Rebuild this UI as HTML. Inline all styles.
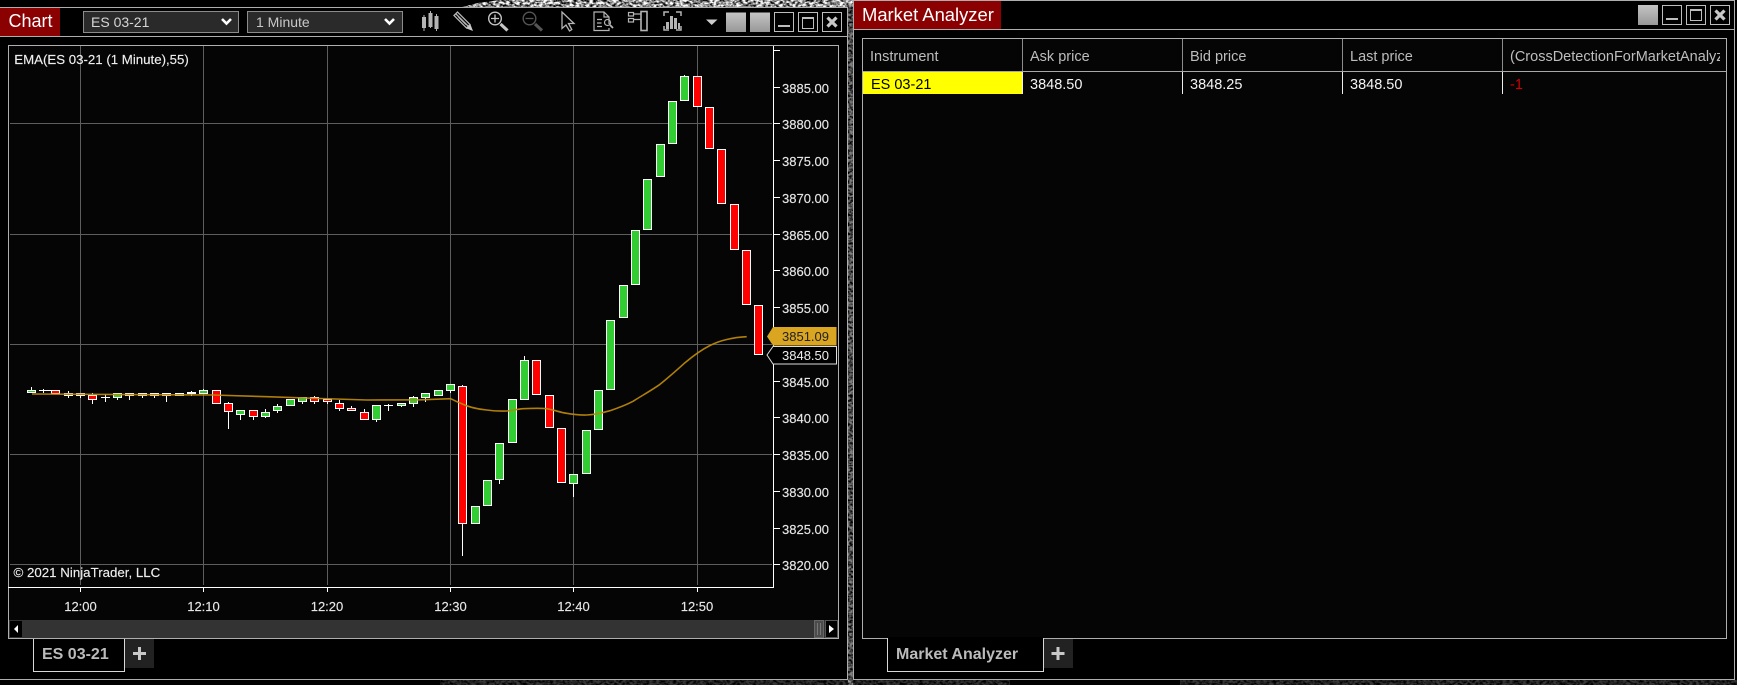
<!DOCTYPE html>
<html><head><meta charset="utf-8"><title>Chart</title>
<style>
html,body{margin:0;padding:0;background:#000;width:1737px;height:685px;overflow:hidden}
svg{display:block;font-family:"Liberation Sans",sans-serif}
.c{shape-rendering:crispEdges}
.p text{font-size:13px;fill:#e6e6e6;stroke:#e6e6e6;stroke-width:.15}
.h text{font-size:14.5px;fill:#bdbdbd}
.d text{font-size:14.5px;fill:#f4f4f4}
</style></head><body>
<svg width="1737" height="685" viewBox="0 0 1737 685" xmlns="http://www.w3.org/2000/svg">
<defs>
<filter id="n" x="0" y="0" width="100%" height="100%" color-interpolation-filters="sRGB">
<feTurbulence type="fractalNoise" baseFrequency=".3 .42" numOctaves="2" seed="7"/>
<feColorMatrix values="2.6 0 0 0 -.72  2.6 0 0 0 -.72  2.6 0 0 0 -.72  0 0 0 0 1"/>
</filter>
<clipPath id="top"><path d="M462 7L478 3L500 0H853V7H853V685H848V7Z"/></clipPath>
<clipPath id="bot"><path d="M440 680H1010V685H440ZM1180 680H1737V685H1180Z"/></clipPath>
<linearGradient id="g" x1="0" y1="0" x2="0" y2="1"><stop offset="0" stop-color="#c4c4c4"/><stop offset="1" stop-color="#989898"/></linearGradient>
</defs>
<rect width="1737" height="685" fill="#000"/>
<!-- wallpaper noise -->
<g clip-path="url(#top)"><rect x="462" y="0" width="392" height="685" fill="#fff" filter="url(#n)"/></g>
<rect x="848" y="7" width="5" height="678" fill="#000" opacity=".5"/>
<g clip-path="url(#bot)" opacity=".22"><rect x="440" y="680" width="1297" height="5" fill="#fff" filter="url(#n)"/></g>
<!-- left window -->
<rect x="0" y="7" width="848" height="673" fill="#000"/>
<g class="c" fill="none" stroke="#aeaeae">
<path d="M0 7.5H847.5V679.5H0"/>
<path d="M0 36.5H847"/>
<rect x="8.5" y="45.5" width="830" height="593" fill="#050505"/>
</g>
<rect x="0" y="8" width="60" height="28" fill="#8b0000"/>
<text x="8.5" y="27" font-size="18" fill="#fff">Chart</text>
<g class="c"><rect x="83.5" y="11.5" width="155" height="21" fill="#2a2a2a" stroke="#8c8c8c"/><rect x="247.5" y="11.5" width="155" height="21" fill="#2a2a2a" stroke="#8c8c8c"/></g>
<text x="91" y="27" font-size="14" fill="#d6d6d6">ES 03-21</text>
<text x="256" y="27" font-size="14" fill="#c8c8c8">1 Minute</text>
<path d="M222 19L226.5 23.5L231 19M385 19L389.5 23.5L394 19" fill="none" stroke="#fff" stroke-width="2.6"/>
<!-- toolbar icons -->
<g fill="#b4b4b4" stroke="none">
<rect x="422" y="17" width="4" height="11"/><rect x="423.5" y="15" width="1" height="16"/>
<rect x="428.5" y="13" width="4" height="14"/><rect x="430" y="11" width="1" height="17"/>
<rect x="434.5" y="16" width="4" height="13"/><rect x="436" y="14" width="1" height="17"/>
</g>
<g fill="none" stroke="#b4b4b4" stroke-width="1.3">
<path d="M454 15.5L457.5 12L470 24.5L466.5 28Z M456 14L468.5 26.5 M458.5 17L466 24.5"/>
</g>
<path d="M466.5 28.5L470.5 24.5L473 31Z" fill="#c8c8c8"/>
<g fill="none" stroke="#c4c4c4">
<circle cx="495" cy="18.5" r="6.3" stroke-width="1.4"/><path d="M495 14.5V22.5M491 18.5H499" stroke-width="1.3"/>
<path d="M500.5 24L507.5 30.5" stroke-width="3.2"/>
</g>
<g fill="none" stroke="#555">
<circle cx="529.5" cy="18.5" r="6.3" stroke-width="1.4"/><path d="M525.5 18.5H533.5" stroke-width="1.3"/>
<path d="M535 24L542 30.5" stroke-width="3.2"/>
</g>
<path d="M562 12V28.5L566 25L569.5 31L571.8 29.5L568.5 23.5L574 23.5Z" fill="none" stroke="#b4b4b4" stroke-width="1.3"/>
<g fill="none" stroke="#b4b4b4" stroke-width="1.2">
<path d="M609 24V17L604 12H594V30.5H609V28 M604 12V17H609"/>
<path d="M597 19.5H602M597 23H601.5M597 26.5H602"/>
<circle cx="607.5" cy="22.5" r="3"/><path d="M610 25L613 28" stroke-width="1.8"/>
<rect x="628.5" y="12.5" width="5" height="3.5"/><rect x="628.5" y="18.5" width="5" height="3.5"/>
<path d="M633 19.5H641M633 14H641"/>
<rect x="641" y="11.5" width="6" height="19" stroke-width="1.6"/>
<path d="M669 12H664V16M676 12H681V16M669 30H664V26M676 30H681V26" stroke-width="1.5"/>
</g>
<g fill="#b4b4b4"><rect x="666" y="22" width="3" height="7"/><rect x="670" y="16" width="3" height="13"/><rect x="674" y="18" width="3" height="11"/><rect x="678" y="23" width="2" height="6"/></g>
<path d="M706 19.5H717.5L711.7 25Z" fill="#ccc"/>
<rect x="726" y="12.5" width="20" height="19.5" fill="url(#g)"/>
<rect x="750" y="12.5" width="20" height="19.5" fill="url(#g)"/>
<g class="c" fill="none" stroke="#bdbdbd">
<rect x="774.5" y="12.5" width="19" height="19"/><rect x="798.5" y="12.5" width="19" height="19"/><rect x="822.5" y="12.5" width="19" height="19"/>
<rect x="802.5" y="17.5" width="11" height="11"/>
</g>
<g class="c" fill="#bdbdbd"><rect x="778" y="25" width="12" height="2"/><rect x="802" y="17" width="12" height="2"/></g>
<path d="M827.5 17.5L836.5 26.5M836.5 17.5L827.5 26.5" stroke="#c8c8c8" stroke-width="3.2"/>
<!-- chart grid -->
<g class="c" stroke="#5e5e5e" fill="none">
<path d="M10 123.5H772M10 234.5H772M10 344.5H772M10 454.5H772M10 564.5H772"/>
<path d="M80.5 46V585M203.5 46V585M327.5 46V585M450.5 46V585M573.5 46V585M697.5 46V585"/>
</g>
<!-- axes -->
<g class="c" stroke="#fff" fill="none" stroke-width="1">
<path d="M773.5 46V587.5M8 587.5H774"/>
<path d="M774 50.5H780M774 87.5H780M774 123.5H780M774 160.5H780M774 197.5H780M774 234.5H780M774 270.5H780M774 307.5H780M774 381.5H780M774 417.5H780M774 454.5H780M774 491.5H780M774 528.5H780M774 564.5H780"/>
<path d="M80.5 587V592M203.5 587V592M327.5 587V592M450.5 587V592M573.5 587V592M697.5 587V592"/>
</g>
<g class="p">
<text x="782" y="93">3885.00</text><text x="782" y="129">3880.00</text><text x="782" y="166">3875.00</text><text x="782" y="203">3870.00</text><text x="782" y="240">3865.00</text><text x="782" y="276">3860.00</text><text x="782" y="313">3855.00</text><text x="782" y="387">3845.00</text><text x="782" y="423">3840.00</text><text x="782" y="460">3835.00</text><text x="782" y="497">3830.00</text><text x="782" y="534">3825.00</text><text x="782" y="570">3820.00</text>
<text x="80.5" y="611" text-anchor="middle">12:00</text><text x="203.5" y="611" text-anchor="middle">12:10</text><text x="327" y="611" text-anchor="middle">12:20</text><text x="450.5" y="611" text-anchor="middle">12:30</text><text x="573.5" y="611" text-anchor="middle">12:40</text><text x="697" y="611" text-anchor="middle">12:50</text>
<text x="14.3" y="64" style="font-size:13.25px;fill:#f0f0f0">EMA(ES 03-21 (1 Minute),55)</text>
<text x="13.5" y="577" style="font-size:13.3px;fill:#f0f0f0">© 2021 NinjaTrader, LLC</text>
</g>
<!-- wicks -->
<path class="c" stroke="#fff" fill="none" d="M31.5 387V390M43.5 389V393M39 390.5H52M68.5 391V393M68.5 396V398M80.5 396V398M92.5 393V395M92.5 400V404M105.5 394V402M101 397.5H110M117.5 398V400M129.5 396V400M142.5 396V398M154.5 396V398M166.5 396V402M191.5 391V396M203.5 389V390M228.5 402V403M228.5 412V429M240.5 415V420M253.5 417V420M265.5 409V412M265.5 417V418M277.5 404V406M277.5 411V413M302.5 402V404M314.5 396V397M314.5 402V404M327.5 402V404M339.5 400V403M339.5 409V411M351.5 406V408M364.5 409V412M376.5 420V422M388.5 404V411M384 405.5H393M401.5 406V407M413.5 396V397M413.5 404V407M425.5 398V402M450.5 391V393M462.5 385V386M462.5 524V556M499.5 480V484M524.5 356V360M573.5 484V497M684.5 75V76"/>
<rect class="c" x="187" y="392" width="9" height="2" fill="#fff"/>
<!-- green candles -->
<g class="c" fill="#32cd32" stroke="#fff">
<rect x="27.5" y="390.5" width="8" height="2"/><rect x="113.5" y="393.5" width="8" height="4"/><rect x="138.5" y="393.5" width="8" height="2"/><rect x="175.5" y="393.5" width="8" height="2"/><rect x="199.5" y="390.5" width="8" height="3"/><rect x="236.5" y="410.5" width="8" height="4"/><rect x="261.5" y="412.5" width="8" height="4"/><rect x="273.5" y="406.5" width="8" height="4"/><rect x="286.5" y="399.5" width="8" height="6"/><rect x="298.5" y="397.5" width="8" height="4"/><rect x="372.5" y="405.5" width="8" height="14"/><rect x="397.5" y="403.5" width="8" height="2"/><rect x="409.5" y="397.5" width="8" height="6"/><rect x="421.5" y="393.5" width="8" height="4"/><rect x="434.5" y="390.5" width="8" height="5"/><rect x="446.5" y="384.5" width="8" height="6"/><rect x="471.5" y="506.5" width="8" height="17"/><rect x="483.5" y="480.5" width="8" height="25"/><rect x="495.5" y="443.5" width="8" height="36"/><rect x="508.5" y="399.5" width="8" height="43"/><rect x="520.5" y="360.5" width="8" height="39"/><rect x="569.5" y="474.5" width="8" height="9"/><rect x="582.5" y="430.5" width="8" height="43"/><rect x="594.5" y="390.5" width="8" height="39"/><rect x="606.5" y="320.5" width="8" height="69"/><rect x="619.5" y="285.5" width="8" height="32"/><rect x="631.5" y="230.5" width="8" height="54"/><rect x="643.5" y="179.5" width="8" height="50"/><rect x="656.5" y="144.5" width="8" height="32"/><rect x="668.5" y="101.5" width="8" height="42"/><rect x="680.5" y="76.5" width="8" height="24"/>
</g>
<!-- red candles -->
<g class="c" fill="#f00" stroke="#fff">
<rect x="51.5" y="390.5" width="8" height="3"/><rect x="64.5" y="393.5" width="8" height="2"/><rect x="76.5" y="393.5" width="8" height="2"/><rect x="88.5" y="395.5" width="8" height="4"/><rect x="125.5" y="393.5" width="8" height="2"/><rect x="150.5" y="393.5" width="8" height="2"/><rect x="162.5" y="393.5" width="8" height="2"/><rect x="212.5" y="390.5" width="8" height="13"/><rect x="224.5" y="403.5" width="8" height="8"/><rect x="249.5" y="410.5" width="8" height="6"/><rect x="310.5" y="397.5" width="8" height="4"/><rect x="323.5" y="399.5" width="8" height="2"/><rect x="335.5" y="403.5" width="8" height="5"/><rect x="347.5" y="408.5" width="8" height="2"/><rect x="360.5" y="412.5" width="8" height="7"/><rect x="458.5" y="386.5" width="8" height="137"/><rect x="532.5" y="360.5" width="8" height="34"/><rect x="545.5" y="395.5" width="8" height="32"/><rect x="557.5" y="428.5" width="8" height="54"/><rect x="693.5" y="76.5" width="8" height="30"/><rect x="705.5" y="107.5" width="8" height="41"/><rect x="717.5" y="149.5" width="8" height="54"/><rect x="730.5" y="204.5" width="8" height="45"/><rect x="742.5" y="250.5" width="8" height="54"/><rect x="754.5" y="305.5" width="8" height="49"/>
</g>
<!-- EMA -->
<path d="M32 394L213 395L267 396.7L320 398.5L367 400L420 399.8L450.7 398.7C454 400 457 402 460 403C466 406 476 409 486.7 410C494 411 500 411.3 506.7 411C512 410.6 518 409 523 408.7C532 408.3 540 408 546.7 408.7C554 409.8 560 412.4 566.7 413.3C574 414.6 580 415.2 586.7 415C595 414.6 602 413 610 410.7C618 408 626 405 633 401.3C643 395 652 390 660 384.3C669 377 677 370 685 362.7C693 356 701 350 710 345.5C715 343 721 340.8 726.7 339.5C733 338 740 337 746.7 336.7" fill="none" stroke="#b8860b" stroke-width="1.6" opacity=".95"/>
<!-- price tags -->
<path d="M767 336.5L773 327H836.5V345.5H773Z" fill="#daa520"/>
<text x="782" y="341" font-size="13" fill="#222">3851.09</text>
<path d="M767 355L773 346.5H836.5V364H773Z" fill="#000" stroke="#ddd"/>
<text x="782" y="360" font-size="13" fill="#eee">3848.50</text>
<!-- scrollbar -->
<g class="c">
<rect x="9" y="620" width="829" height="18" fill="#333"/>
<rect x="10" y="621" width="12" height="16" fill="#000"/>
<rect x="814.5" y="620.5" width="9" height="17" fill="#4c4c4c" stroke="#666"/>
<path d="M817.5 623V635M820.5 623V635" stroke="#777" fill="none"/>
<rect x="825.5" y="620.5" width="12" height="17" fill="#000" stroke="#555"/>
</g>
<path d="M18 625V633L14 629Z M829 625V633L834 629Z" fill="#fff"/>
<!-- left tab -->
<path class="c" d="M33.5 639V671.5H124.5V639" fill="none" stroke="#d8d8d8"/>
<text x="42" y="659" font-size="16" font-weight="bold" fill="#bbb">ES 03-21</text>
<rect x="125" y="639" width="29" height="29" fill="#222"/>
<path class="c" d="M133 653.5H146M139.5 647V660" stroke="#c8c8c8" stroke-width="3" fill="none"/>

<!-- right window -->
<rect x="853" y="0" width="883" height="680" fill="#000"/>
<g class="c" fill="none" stroke="#aeaeae">
<rect x="853.5" y="0.5" width="881" height="679"/>
<path d="M854 29.5H1735"/>
<rect x="862.5" y="38.5" width="864" height="600" fill="#050505"/>
</g>
<rect x="854" y="1" width="147" height="28" fill="#8b0000"/>
<text x="862" y="21" font-size="18.4" fill="#fff">Market Analyzer</text>
<rect x="1638" y="5" width="20" height="20" fill="url(#g)"/>
<g class="c" fill="none" stroke="#bdbdbd">
<rect x="1662.5" y="5.5" width="19" height="19"/><rect x="1686.5" y="5.5" width="19" height="19"/><rect x="1710.5" y="5.5" width="19" height="19"/>
<rect x="1690.5" y="9.5" width="11" height="11"/>
</g>
<g class="c" fill="#bdbdbd"><rect x="1666" y="18" width="12" height="2"/><rect x="1690" y="9" width="12" height="2"/></g>
<path d="M1715.5 10.5L1724.5 19.5M1724.5 10.5L1715.5 19.5" stroke="#c8c8c8" stroke-width="3.2"/>
<g class="c" fill="none">
<path d="M863 71.5H1726" stroke="#a8a8a8"/>
<path d="M1022.5 39V71M1182.5 39V71M1342.5 39V71M1502.5 39V71" stroke="#8c8c8c"/>
<path d="M1022.5 72V94M1182.5 72V94M1342.5 72V94M1502.5 72V94" stroke="#eee"/>
</g>
<rect x="863" y="72" width="159" height="22" fill="#ff0"/>
<g class="h">
<text x="870" y="61">Instrument</text><text x="1030" y="61">Ask price</text><text x="1190" y="61">Bid price</text><text x="1350" y="61">Last price</text>
<svg x="1510" y="40" width="210" height="30"><text x="0" y="21">(CrossDetectionForMarketAnalyzer)</text></svg>
</g>
<g class="d">
<text x="871" y="89" style="fill:#000">ES 03-21</text><text x="1030" y="89">3848.50</text><text x="1190" y="89">3848.25</text><text x="1350" y="89">3848.50</text>
<text x="1510" y="89" style="fill:#d00000">-1</text>
</g>
<rect x="888" y="637" width="155" height="34" fill="#000"/>
<path class="c" d="M887.5 638V671.5H1043.5V638" fill="none" stroke="#d8d8d8"/>
<text x="896" y="659" font-size="16" font-weight="bold" fill="#bbb">Market Analyzer</text>
<rect x="1044" y="639" width="29" height="29" fill="#222"/>
<path class="c" d="M1051.5 653.5H1064.5M1058 647V660" stroke="#c8c8c8" stroke-width="3" fill="none"/>
</svg>
</body></html>
